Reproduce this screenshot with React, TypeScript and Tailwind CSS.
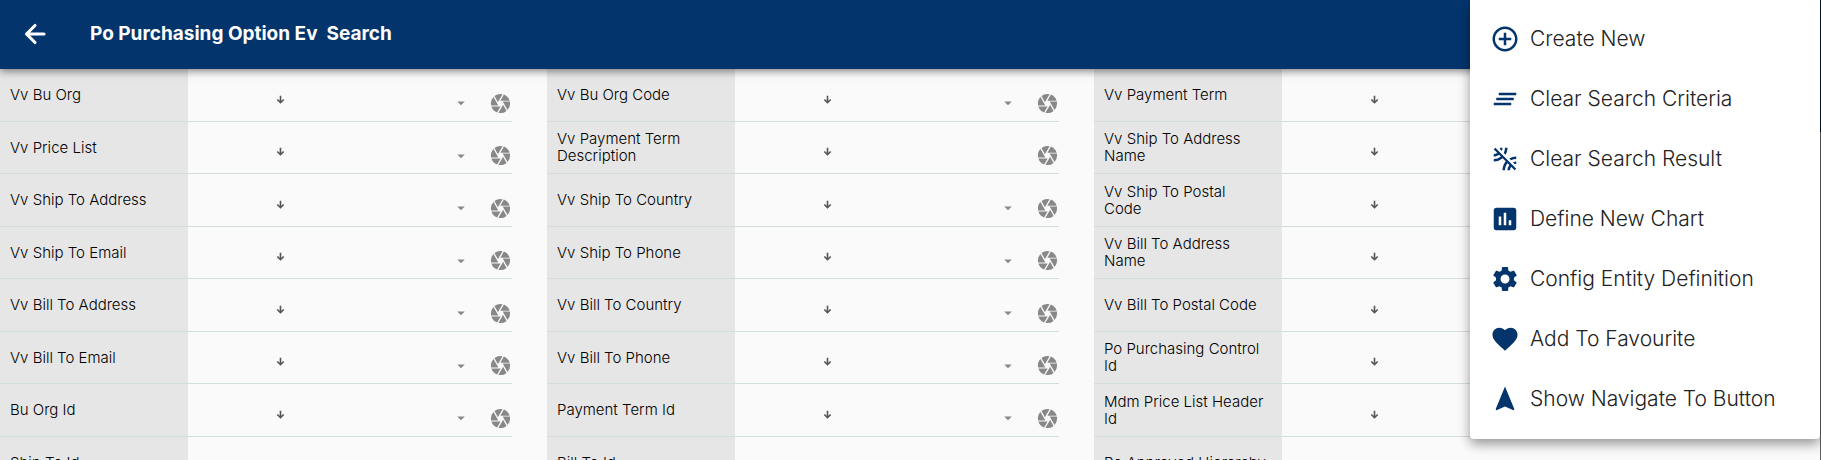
import { MdArrowDropDown, MdCamera, MdOutlineAddCircleOutline, MdClearAll, MdLeakRemove, MdAssessment, MdSettings, MdFavorite, MdNavigation } from "react-icons/md";

const columns = [
  ["Vv Bu Org", "Vv Price List", "Vv Ship To Address", "Vv Ship To Email", "Vv Bill To Address", "Vv Bill To Email", "Bu Org Id", "Ship To Id"],
  ["Vv Bu Org Code", "Vv Payment Term Description", "Vv Ship To Country", "Vv Ship To Phone", "Vv Bill To Country", "Vv Bill To Phone", "Payment Term Id", "Bill To Id"],
  ["Vv Payment Term", "Vv Ship To Address Name", "Vv Ship To Postal Code", "Vv Bill To Address Name", "Vv Bill To Postal Code", "Po Purchasing Control Id", "Mdm Price List Header Id", "Po Approved Hierarchy"],
];
const withoutDropdown = ["Vv Payment Term Description"];
const onOneLine = ["Po Approved Hierarchy"];

const menu = [
  { label: "Create New", Icon: MdOutlineAddCircleOutline },
  { label: "Clear Search Criteria", Icon: MdClearAll },
  { label: "Clear Search Result", Icon: MdLeakRemove },
  { label: "Define New Chart", Icon: MdAssessment },
  { label: "Config Entity Definition", Icon: MdSettings },
  { label: "Add To Favourite", Icon: MdFavorite },
  { label: "Show Navigate To Button", Icon: MdNavigation },
];

function Field({ label }: { label: string }) {
  const id = label.toLowerCase().replaceAll(" ", "-");
  return (
    <div className="mr-[35px] flex border-b border-[#d3dcdf] odd:h-[53px] even:h-[52px]">
      <label htmlFor={id} className="flex w-[188px] shrink-0 items-center border-b border-transparent bg-[#e6e6e6] pr-[17px] pl-[10px] text-[15px] leading-[17px] font-light text-black">
        <span className={onOneLine.includes(label) ? "whitespace-nowrap" : undefined}>{label}</span>
      </label>
      <div className="flex min-w-0 flex-1 items-center pt-2">
        <button aria-label={`${label} sort`} className="ml-[87px] text-[#555]">
          <svg width="11" height="11" viewBox="0 0 24 24" fill="none" stroke="currentColor" strokeWidth="3.5">
            <path d="M12 4v15M5 12l7 7 7-7" />
          </svg>
        </button>
        <input id={id} className="min-w-0 flex-1 bg-transparent outline-none" />
        <div className="flex items-center gap-[19px] pt-2">
          {!withoutDropdown.includes(label) && (
            <button aria-label={`${label} options`} className="text-[#888]"><MdArrowDropDown size={18} /></button>
          )}
          <button aria-label={`${label} lookup`} className="text-[#888]"><MdCamera size={23} /></button>
        </div>
      </div>
    </div>
  );
}

export default function App() {
  return (
    <div className="relative h-screen overflow-hidden bg-[#fafafa] font-['Inter',sans-serif]">
      <header className="relative flex h-[69px] items-center bg-[#03346c] pb-px pl-5 text-white shadow-[0_2px_8px_rgba(0,0,0,0.5)]">
        <button aria-label="Back">
          <svg width="30" height="30" viewBox="0 0 24 24" fill="none" stroke="currentColor" strokeWidth="2.5" strokeLinecap="round" strokeLinejoin="round">
            <path d="M19.2 12H5.2M12 5.2L5.2 12l6.8 6.8" />
          </svg>
        </button>
        <h1 className="ml-10 text-[19px] font-bold whitespace-pre">Po Purchasing Option Ev  Search</h1>
      </header>
      <main className="grid grid-cols-3 pr-[180px]">
        {columns.map((fields) => (
          <section key={fields[0]}>
            {fields.map((f) => <Field key={f} label={f} />)}
          </section>
        ))}
      </main>
      <div className="absolute inset-y-0 right-0 flex w-px flex-col">
        <div className="h-[132px] bg-[#01162e]" />
        <div className="flex-1 bg-[#5f5f5f]" />
      </div>
      <nav className="absolute top-0 right-px w-[350px] rounded-b bg-white pt-[9px] pb-[10px] shadow-[0_5px_12px_rgba(0,0,0,0.4)]">
        {menu.map(({ label, Icon }) => (
          <button key={label} className="flex h-[60px] w-full items-center gap-[10px] pl-5 text-[21px] font-light text-[#222]">
            <Icon size={30} className="text-[#03346c]" />
            {label}
          </button>
        ))}
      </nav>
    </div>
  );
}
